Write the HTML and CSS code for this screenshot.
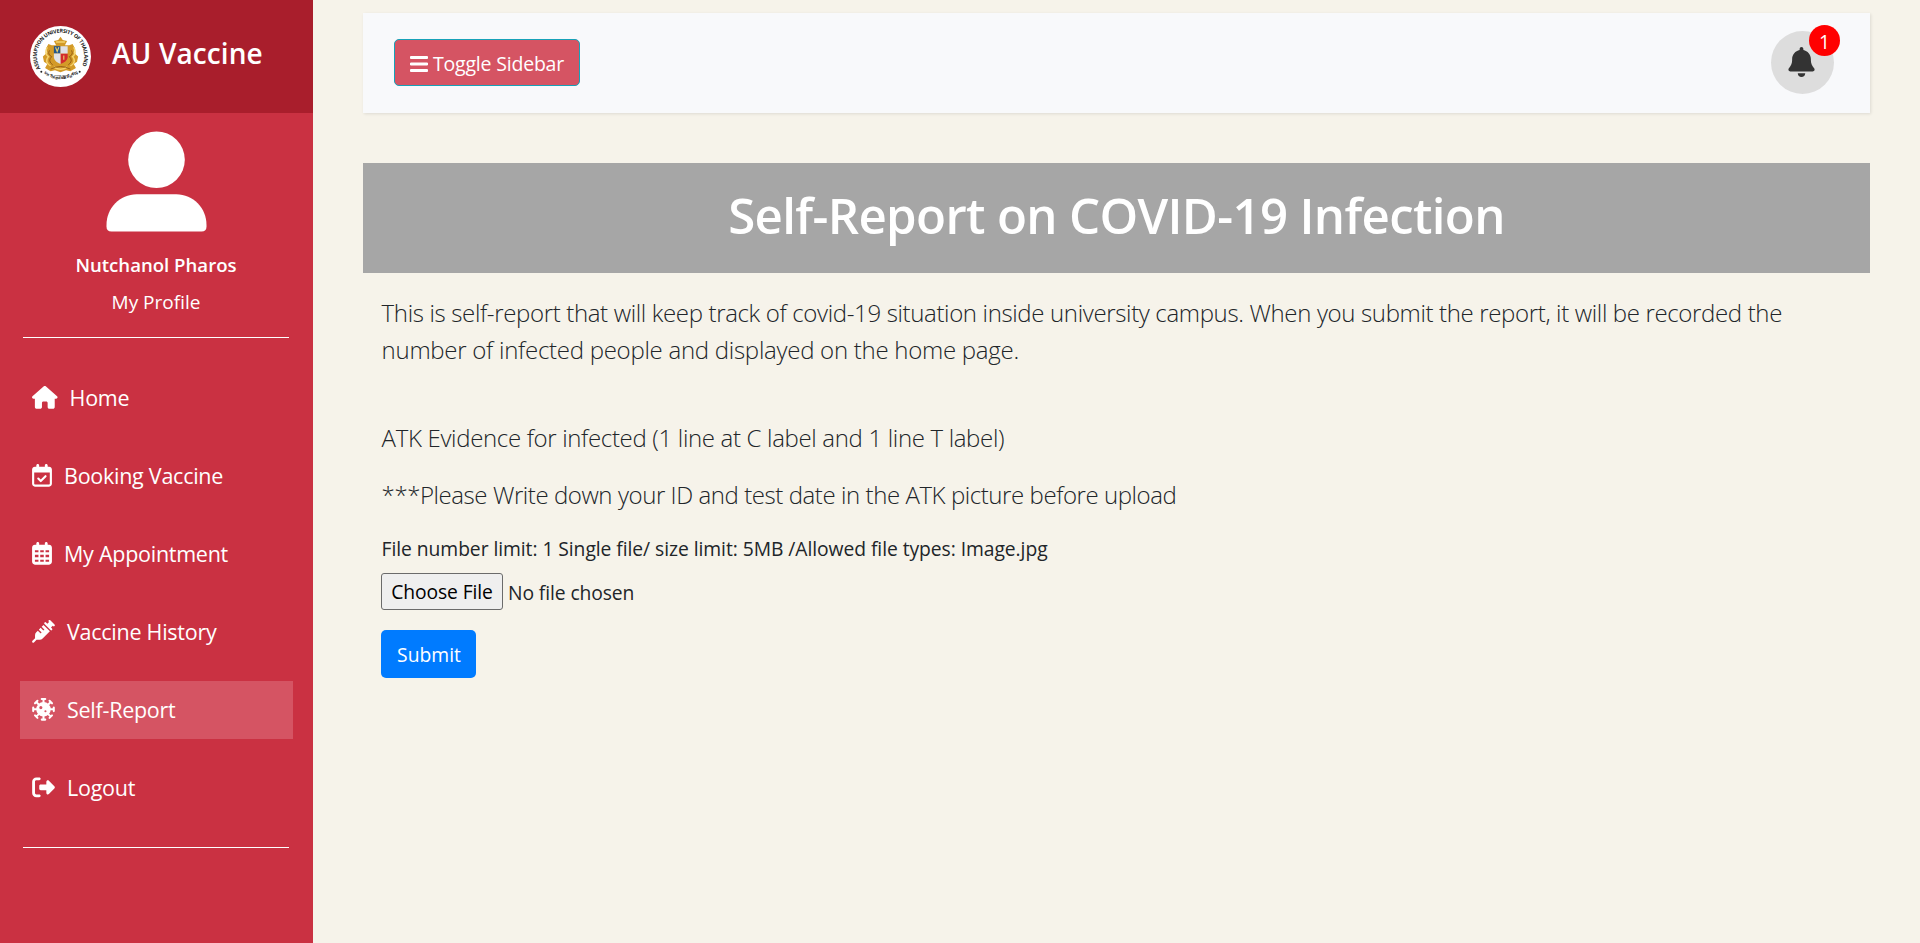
FILE: index.html
```html
<!DOCTYPE html>
<html lang="en">
<head>
<meta charset="utf-8">
<title>AU Vaccine</title>
<link rel="stylesheet" href="styles.css">
</head>
<body>
<aside class="sidebar">
  <header class="brand">
    <svg class="seal" viewBox="0 0 62 62">
      <defs>
        <path id="arc-top" d="M10.600 43.400A24 24 0 1 1 51.400 43.400"/>
        <path id="arc-bottom" d="M11.500 45.500A26.500 26.500 0 0 0 50.500 45.500"/>
      </defs>
      <circle cx="31" cy="31" r="31" fill="#fff"/>
      <text class="seal-text"><textPath href="#arc-top" textLength="98">ASSUMPTION UNIVERSITY OF THAILAND</textPath></text>
      <text class="seal-thai"><textPath href="#arc-bottom" startOffset="4" textLength="37">มหาวิทยาลัยอัสสัมชัญ</textPath></text>
      <circle cx="11.500" cy="46.500" r="1" fill="#222"/><circle cx="50.500" cy="46.500" r="1" fill="#222"/>
      <g transform="translate(31 29) scale(1.120 1.060) translate(-31 -29)">
      <path fill="#d39a28" d="M31 12l2 3 4 1-2 4h4l3-1 2 4-1 4 4 4-1 5-3 2 2 4-5 3-4-1-5 2-5-2-4 1-5-3 2-4-3-2-1-5 4-4-1-4 2-4 3 1h4l-2-4 4-1z"/>
      <path fill="none" stroke="#f5d36c" stroke-width="1.400" d="M19 22q-3 6 1 9q-4 5 2 9M43 22q3 6-1 9q4 5-2 9M25 41q6 4 12 0M27 17h8"/>
      <path fill="none" stroke="#8a5514" stroke-width=".800" d="M21 25q-2 4 2 6-4 4 1 8M41 25q2 4-2 6 4 4-1 8M22 43q9-5 18 0"/>
      <path fill="#24568d" d="M25 21h6v7h-6z"/>
      <path fill="#d32c2e" d="M31 28h6.500v4q-1 4-6.500 6z"/>
      <path fill="#dfe1e8" d="M31 21h6.500v7H31zM25 28h6v10q-5-2-6-6z"/>
      <path fill="none" stroke="#ecd16b" d="M26.500 22l1.500 4 1.500-4M34 30v4"/>
      </g>
      <text class="seal-since" x="31" y="50.500" text-anchor="middle">SINCE 1969</text>
    </svg>
    <span class="brand-name">AU Vaccine</span>
  </header>
  <div class="profile">
    <svg class="avatar" viewBox="0 0 102 102"><circle cx="51" cy="29" r="28.600"/><path d="M31 64h40c17 0 30.500 14 30.500 31v1.500q0 5-5 5h-91q-5 0-5-5V95C.500 78 14 64 31 64z"/></svg>
    <strong class="user-name">Nutchanol Pharos</strong>
    <a class="profile-link">My Profile</a>
  </div>
  <nav class="menu">
    <a class="item"><svg class="wide" viewBox="0 0 576 512"><path d="M575.800 255.500c0 18-15 32.100-32 32.100h-32l.700 160.200c0 2.700-.200 5.400-.500 8.100V472c0 22.100-17.900 40-40 40h-80c-22.100 0-40-17.900-40-40v-88c0-17.700-14.300-32-32-32h-64c-17.700 0-32 14.300-32 32v88c0 22.100-17.900 40-40 40h-80c-22.100 0-40-17.900-40-40V287.600H32c-18 0-32-14-32-32.100 0-9 3-17 10-24L266.400 8c7-7 15-8 22-8s15 2 21 7l255.400 224.500c8 7 12 15 11 24z"/></svg><span>Home</span></a>
    <a class="item"><svg class="narrow" viewBox="0 0 448 512"><path fill-rule="evenodd" d="M128 0c17.700 0 32 14.300 32 32v32h128V32c0-17.700 14.300-32 32-32s32 14.300 32 32v32h32c35.300 0 64 28.700 64 64v320c0 35.300-28.700 64-64 64H64c-35.300 0-64-28.700-64-64V128c0-35.300 28.700-64 64-64h32V32c0-17.700 14.300-32 32-32zM48 192v256c0 8.800 7.200 16 16 16h320c8.800 0 16-7.200 16-16V192z"/><path class="tick" d="M140 328l56 56 108-108"/></svg><span>Booking Vaccine</span></a>
    <a class="item"><svg class="narrow" viewBox="0 0 448 512"><path fill-rule="evenodd" d="M128 0c17.700 0 32 14.300 32 32v32h128V32c0-17.700 14.300-32 32-32s32 14.300 32 32v32h32c35.300 0 64 28.700 64 64v320c0 35.300-28.700 64-64 64H64c-35.300 0-64-28.700-64-64V128c0-35.300 28.700-64 64-64h32V32c0-17.700 14.300-32 32-32zM64 184v48h80v-48zm120 0v48h80v-48zm120 0v48h80v-48zM64 288v56h80v-56zm120 0v56h80v-56zm120 0v56h80v-56zM64 400v48h80v-48zm120 0v48h80v-48zm120 0v48h80v-48z"/></svg><span>My Appointment</span></a>
    <a class="item"><svg viewBox="0 0 512 512"><path d="M375 7q17-15 34 0l96 96q15 17 0 34t-34 0l-7-7-39 39 23 23q15 17 0 34t-34 0L279 88q-15-17 0-34t34 0l30 30 39-39-7-7q-15-15 0-31zM256 112l144 144-163 163q-28 28-68 28H99l-58 58q-17 15-34 0t0-34l58-58v-70q0-40 28-68l35-35 54 54q11 8 22 0t0-22l-54-54 42-42 54 54q11 8 22 0t0-22l-54-54z"/></svg><span>Vaccine History</span></a>
    <a class="item active"><svg viewBox="0 0 512 512"><path fill-rule="evenodd" d="M256 92a164 164 0 1 0 0 328 164 164 0 0 0 0-328zM196 180a36 36 0 1 1 0 72 36 36 0 0 1 0-72zM300 276a24 24 0 1 1 0 48 24 24 0 0 1 0-48z"/><path class="spikes" d="M256 120V24M216 24h80M256 392v96M216 488h80M120 256H24M24 216v80M392 256h96M488 216v80M160 160L92 92M64 120l56-56M352 160l68-68M392 64l56 56M160 352l-68 68M64 392l56 56M352 352l68 68M392 448l56-56"/></svg><span>Self-Report</span></a>
    <a class="item"><svg viewBox="0 0 512 512"><path d="M377.900 105.900l122.800 122.800c7.200 7.200 11.300 17.100 11.300 27.300s-4.100 20.100-11.300 27.300L377.900 406.100c-6.400 6.400-15 9.900-24 9.900-18.700 0-33.900-15.200-33.900-33.900V320H192c-17.700 0-32-14.300-32-32v-64c0-17.700 14.300-32 32-32h128v-62.100c0-18.700 15.200-33.900 33.900-33.900 9 0 17.600 3.600 24 9.900zM160 96H96c-17.700 0-32 14.300-32 32v256c0 17.700 14.300 32 32 32h64c17.700 0 32 14.300 32 32s-14.300 32-32 32H96c-53 0-96-43-96-96V128C0 75 43 32 96 32h64c17.700 0 32 14.300 32 32s-14.300 32-32 32z"/></svg><span>Logout</span></a>
  </nav>
</aside>
<main class="content">
  <div class="topbar">
    <button class="toggle"><svg viewBox="0 0 18 16"><path d="M1 1.500h16M1 8h16M1 14.500h16"/></svg><span>Toggle Sidebar</span></button>
    <div class="bell">
      <svg viewBox="0 0 448 512"><path d="M224 0c-17.700 0-32 14.300-32 32v19.200C119 66 64 130.600 64 208v18.800c0 47-17.300 92.400-48.500 127.600l-7.400 8.300c-8.400 9.400-10.400 22.900-5.300 34.400S19.400 416 32 416h384c12.600 0 24-7.400 29.200-18.900s3.100-25-5.300-34.400l-7.400-8.300C401.300 319.200 384 273.900 384 226.800V208c0-77.400-55-142-128-156.800V32c0-17.700-14.300-32-32-32zM160 448q6 64 64 64t64-64z"/></svg>
      <span class="badge">1</span>
    </div>
  </div>
  <h1 class="title">Self-Report on COVID-19 Infection</h1>
  <section class="report">
    <p class="lead intro"><span class="line-a">This is self-report that will keep track of covid-19 situation inside university campus. When you submit the report, it will be recorded the</span><br><span class="line-b">number of infected people and displayed on the home page.</span></p>
    <p class="lead evidence">ATK Evidence for infected (1 line at C label and 1 line T label)</p>
    <p class="lead notice">***Please Write down your ID and test date in the ATK picture before upload</p>
    <p class="limits">File number limit: 1 Single file/ size limit: 5MB /Allowed file types: Image.jpg</p>
    <div class="file"><button class="choose">Choose File</button><span>No file chosen</span></div>
    <button class="submit">Submit</button>
  </section>
</main>
</body>
</html>
```
FILE: styles.css
```css
* { box-sizing: border-box; }
body {
  margin: 0;
  height: 943px;
  display: flex;
  overflow: hidden;
  background: #f6f3ea;
  color: #212529;
  font-family: "Open Sans", "Noto Sans", sans-serif;
  font-size: 19.3px;
  white-space: nowrap;
}
button { font: inherit; letter-spacing: inherit; margin: 0; }

.sidebar { width: 313px; flex: none; background: #ca3142; color: #fff; }
.brand {
  height: 113px;
  padding: 26px 29px 0 30px;
  display: flex;
  gap: 21px;
  background: #a91e2c;
}
.seal { width: 61px; height: 61px; flex: none; }
.seal-text { font: 700 5.400px "Open Sans", sans-serif; fill: #222; }
.seal-thai { font: 700 4.200px "Noto Sans", sans-serif; fill: #222; }
.seal-since { font: 600 2.400px "Open Sans", sans-serif; fill: #333; }
.brand-name { font-size: 28px; font-weight: 600; line-height: 54px; letter-spacing: .1px; }

.profile {
  height: 225px;
  margin: 0 24px 0 23px;
  padding-top: 18px;
  display: flex;
  flex-direction: column;
  align-items: center;
  border-bottom: 1px solid #fff;
}
.avatar { width: 101px; height: 101px; fill: #fff; }
.user-name { margin-top: 14px; font-size: 18.600px; font-weight: 600; line-height: 37px; }
.profile-link { margin-top: 1px; font-size: 19px; line-height: 37px; }

.menu {
  height: 510px;
  margin: 0 24px 0 23px;
  padding-top: 31px;
  display: flex;
  flex-direction: column;
  gap: 20px;
  border-bottom: 1px solid #fff;
}
.item {
  height: 58px;
  margin: 0 -4px 0 -3px;
  padding: 0 0 1px 12px;
  display: flex;
  align-items: center;
  gap: 12px;
  font-size: 21.500px;
  letter-spacing: -.26px;
}
.item.active { background: #d55463; }
.item svg { width: 23px; height: 22.700px; fill: #fff; }
.item .wide { width: 25.600px; }
.item .narrow { width: 20px; }
.tick { fill: none; stroke: #fff; stroke-width: 48; stroke-linecap: round; stroke-linejoin: round; }
.spikes { fill: none; stroke: #fff; stroke-width: 46; stroke-linecap: round; }

.content { flex: 1; padding: 13px 50px 0; }
.topbar {
  height: 100px;
  padding: 0 36px 0 31px;
  display: flex;
  justify-content: space-between;
  align-items: center;
  background: #f8f9fb;
  box-shadow: 1px 1px 3px rgba(0, 0, 0, .1);
}
.toggle {
  width: 186px;
  height: 47px;
  margin-top: -1px;
  padding: 2px 0 0 15px;
  display: flex;
  align-items: center;
  gap: 5px;
  border: 1px solid #17a2b8;
  border-radius: 5px;
  background: #d55463;
  color: #fff;
  font-size: 19.500px;
  letter-spacing: -.2px;
}
.toggle svg { width: 18px; height: 16px; fill: none; stroke: #fff; stroke-width: 2.800; stroke-linecap: round; }
.bell {
  position: relative;
  width: 63px;
  height: 63px;
  margin-bottom: 2px;
  display: grid;
  place-items: center;
  border-radius: 50%;
  background: #ddd;
}
.bell svg { width: 27px; height: 30px; fill: #333; margin-right: 2px; margin-top: -1px; }
.badge {
  position: absolute;
  top: -6px;
  right: -6px;
  width: 31px;
  height: 31px;
  border-radius: 50%;
  background: #f00;
  color: #fff;
  text-align: center;
  line-height: 33px;
}

.title {
  height: 110px;
  margin: 50px 0 0;
  background: #a6a6a6;
  color: #fff;
  font-size: 49.200px;
  font-weight: 600;
  line-height: 103px;
  letter-spacing: -.66px;
  text-align: center;
}
.report { padding: 21px 18px 0; }
.report p { margin: 0; padding-left: .6px; }
.lead { font-size: 24px; font-weight: 300; line-height: 37px; letter-spacing: -.35px; }
.line-b { letter-spacing: -.27px; }
.report .evidence { margin-top: 51px; letter-spacing: -.33px; }
.report .notice { margin-top: 20px; letter-spacing: -.43px; }
.report .limits { margin-top: 21px; line-height: 30px; letter-spacing: -.06px; }
.file { margin-top: 9px; display: flex; align-items: center; gap: 5px; }
.choose {
  width: 122px;
  height: 37px;
  padding: 0;
  border: 1px solid #6b6b6b;
  border-radius: 3px;
  background: #efefef;
  color: #000;
  letter-spacing: -.1px;
}
.file span { padding-top: 2px; letter-spacing: -.1px; }
.submit {
  width: 95px;
  height: 48px;
  margin-top: 20px;
  padding: 0 0 0 1px;
  border: 0;
  border-radius: 5px;
  background: #007bff;
  color: #fff;
}
```
